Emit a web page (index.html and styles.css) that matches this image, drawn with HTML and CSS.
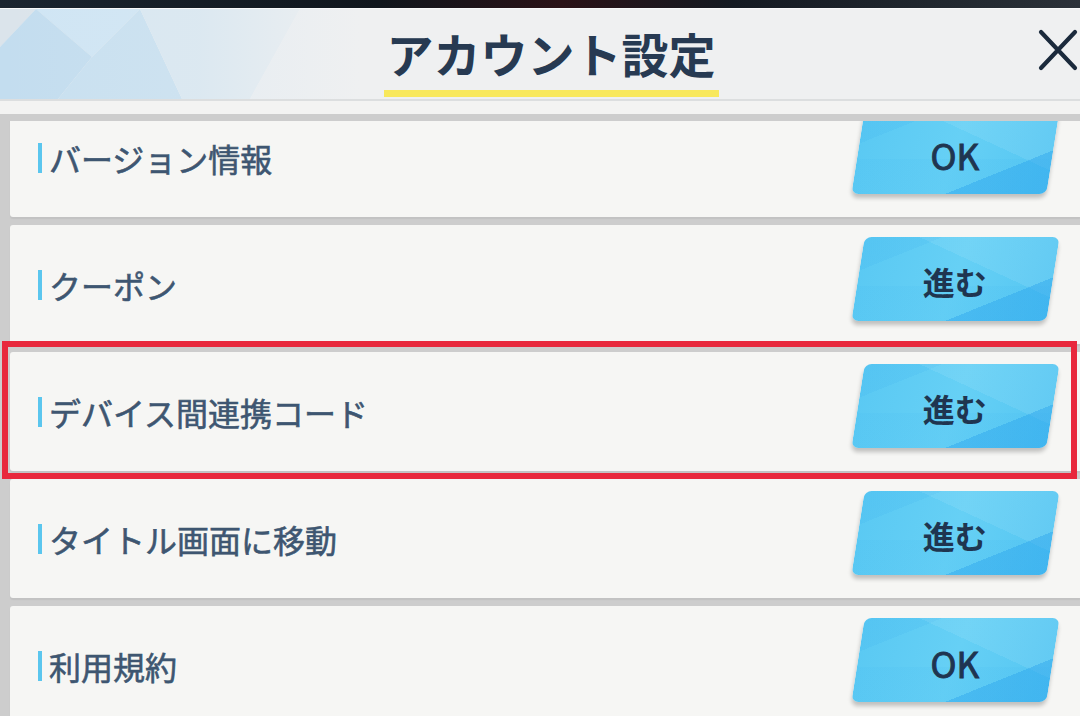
FILE: index.html
```html
<!DOCTYPE html>
<html lang="ja">
<head>
    <meta charset="UTF-8">
    <meta name="viewport" content="width=device-width, initial-scale=1.0">
    <title>アカウント設定</title>
    <link rel="stylesheet" href="styles.css">
</head>
<body>
    <div class="top-strip"></div>

    <header class="header">
        <svg class="header-deco" width="360" height="90" viewBox="0 0 360 90">
            <defs>
                <linearGradient id="fade" x1="0" y1="0" x2="1" y2="0">
                    <stop offset="0" stop-color="#eff0f1" stop-opacity="0"/>
                    <stop offset="0.55" stop-color="#eff0f1" stop-opacity="0.15"/>
                    <stop offset="1" stop-color="#eff0f1" stop-opacity="1"/>
                </linearGradient>
            </defs>
            <polygon points="0,0 36,0 0,38" fill="#dbe4eb"/>
            <polygon points="36,0 140,0 92,48" fill="#cfe5f4"/>
            <polygon points="0,38 36,0 92,48 58,90 0,90" fill="#c3ddef"/>
            <polygon points="92,48 140,0 182,90 58,90" fill="#c8e0f0"/>
            <polygon points="140,0 300,0 250,90 182,90" fill="#d8e7f1"/>
            <polygon points="300,0 360,0 360,90 250,90" fill="#e4ecf2"/>
            <rect x="0" y="0" width="360" height="90" fill="url(#fade)"/>
        </svg>
        <div class="header-side"></div>
        <h1 class="title">アカウント設定</h1>
        <div class="header-side header-close">
            <svg class="close-icon" width="40" height="42" viewBox="0 0 40 42">
                <path d="M3 3 L37 39 M37 3 L3 39" stroke="#1b2a3c" stroke-width="4.2" stroke-linecap="round" fill="none"/>
            </svg>
        </div>
    </header>

    <div class="list-area">
        <div class="list-frame">
            <div class="list-viewport">
                <div class="list">
                    <div class="row">
                        <div class="row-label">バージョン情報</div>
                        <button class="row-btn"><span class="latin">OK</span></button>
                    </div>
                    <div class="row">
                        <div class="row-label">クーポン</div>
                        <button class="row-btn"><span>進む</span></button>
                    </div>
                    <div class="row">
                        <div class="row-label">デバイス間連携コード</div>
                        <button class="row-btn"><span>進む</span></button>
                        <div class="highlight-box"></div>
                    </div>
                    <div class="row">
                        <div class="row-label">タイトル画面に移動</div>
                        <button class="row-btn"><span>進む</span></button>
                    </div>
                    <div class="row">
                        <div class="row-label">利用規約</div>
                        <button class="row-btn"><span class="latin">OK</span></button>
                    </div>
                </div>
            </div>
        </div>
    </div>
</body>
</html>
```

FILE: styles.css
```css
* {
    margin: 0;
    padding: 0;
    box-sizing: border-box;
}

html, body {
    width: 1080px;
    height: 716px;
    overflow: hidden;
}

body {
    font-family: "Noto Sans CJK JP", "Noto Sans", sans-serif;
    background: #f3f3f2;
    display: flex;
    flex-direction: column;
}

.top-strip {
    height: 9px;
    flex-shrink: 0;
    background: linear-gradient(90deg, #1b2530 0%, #10161d 35%, #2a1217 52%, #141a22 68%, #2b3139 100%);
    border-bottom: 1px solid #f7f8f9;
}

/* header */
.header {
    position: relative;
    height: 92px;
    flex-shrink: 0;
    background: #eff0f1;
    border-bottom: 2px solid #dcdedf;
    display: grid;
    grid-template-columns: 1fr auto 1fr;
    align-items: start;
    padding-left: 22px;
}

.header-deco {
    position: absolute;
    left: 0;
    top: 0;
}

.title {
    position: relative;
    margin-top: 20px;
    padding: 0 3px 14px;
    border-bottom: 7px solid #f8e85c;
    font-size: 47px;
    line-height: 1;
    font-weight: 700;
    color: #273a52;
}

.header-close {
    display: flex;
    justify-content: flex-end;
    padding-top: 20px;
    padding-right: 2px;
}

/* list */
.list-area {
    flex: 1;
    padding-top: 13px;
    min-height: 0;
}

.list-frame {
    height: 100%;
    background: #cdcdcd;
    padding: 7px 0 0 10px;
}

.list-viewport {
    display: flow-root;
    height: 100%;
    clip-path: inset(0 -10px 0 -12px);
}

.list {
    margin-top: -23px;
    display: flex;
    flex-direction: column;
    gap: 8px;
}

.row {
    position: relative;
    height: 119px;
    flex-shrink: 0;
    background: #f6f6f4;
    border-radius: 3px 0 0 3px;
    box-shadow: 0 2px 1px #c2c2c2;
    display: flex;
    align-items: center;
    justify-content: space-between;
    padding: 0 27px 0 28px;
}

.row-label {
    display: flex;
    align-items: center;
    gap: 7px;
    font-size: 32px;
    font-weight: 400;
    -webkit-text-stroke: 0.6px #3e5671;
    color: #3e5671;
    margin-top: 1px;
}

.row-label::before {
    content: "";
    width: 4px;
    height: 30px;
    background: #5bc6ee;
}

.row-btn {
    width: 195px;
    height: 84px;
    margin-bottom: 11px;
    border: none;
    border-radius: 7px;
    transform: skewX(-9deg);
    background:
        linear-gradient(to bottom right, transparent 74%, rgba(38, 160, 236, 0.4) 74%),
        linear-gradient(to top right, transparent 64%, rgba(255, 255, 255, 0.08) 64%),
        linear-gradient(to bottom right, rgba(40, 160, 235, 0.1) 0%, rgba(40, 160, 235, 0.1) 20%, transparent 20%),
        linear-gradient(180deg, transparent 58%, rgba(60, 180, 240, 0.1) 58%),
        linear-gradient(100deg, #5ac9f3 0%, #66d0f5 50%, #55c6f2 100%);
    box-shadow: 0 4px 4px rgba(0, 0, 0, 0.22);
    font-family: "Noto Sans CJK JP", "Noto Sans", sans-serif;
    font-size: 32px;
    font-weight: 700;
    color: #1f3550;
    cursor: pointer;
}

.row-btn span {
    display: inline-block;
    transform: skewX(9deg);
    margin-top: 4px;
}

.row-btn .latin {
    font-size: 35px;
    font-weight: 400;
    -webkit-text-stroke: 1px #1f3550;
}

.highlight-box {
    position: absolute;
    top: -11px;
    bottom: -8px;
    left: -8px;
    right: 3px;
    border: 6px solid #e8283c;
    pointer-events: none;
}
```
